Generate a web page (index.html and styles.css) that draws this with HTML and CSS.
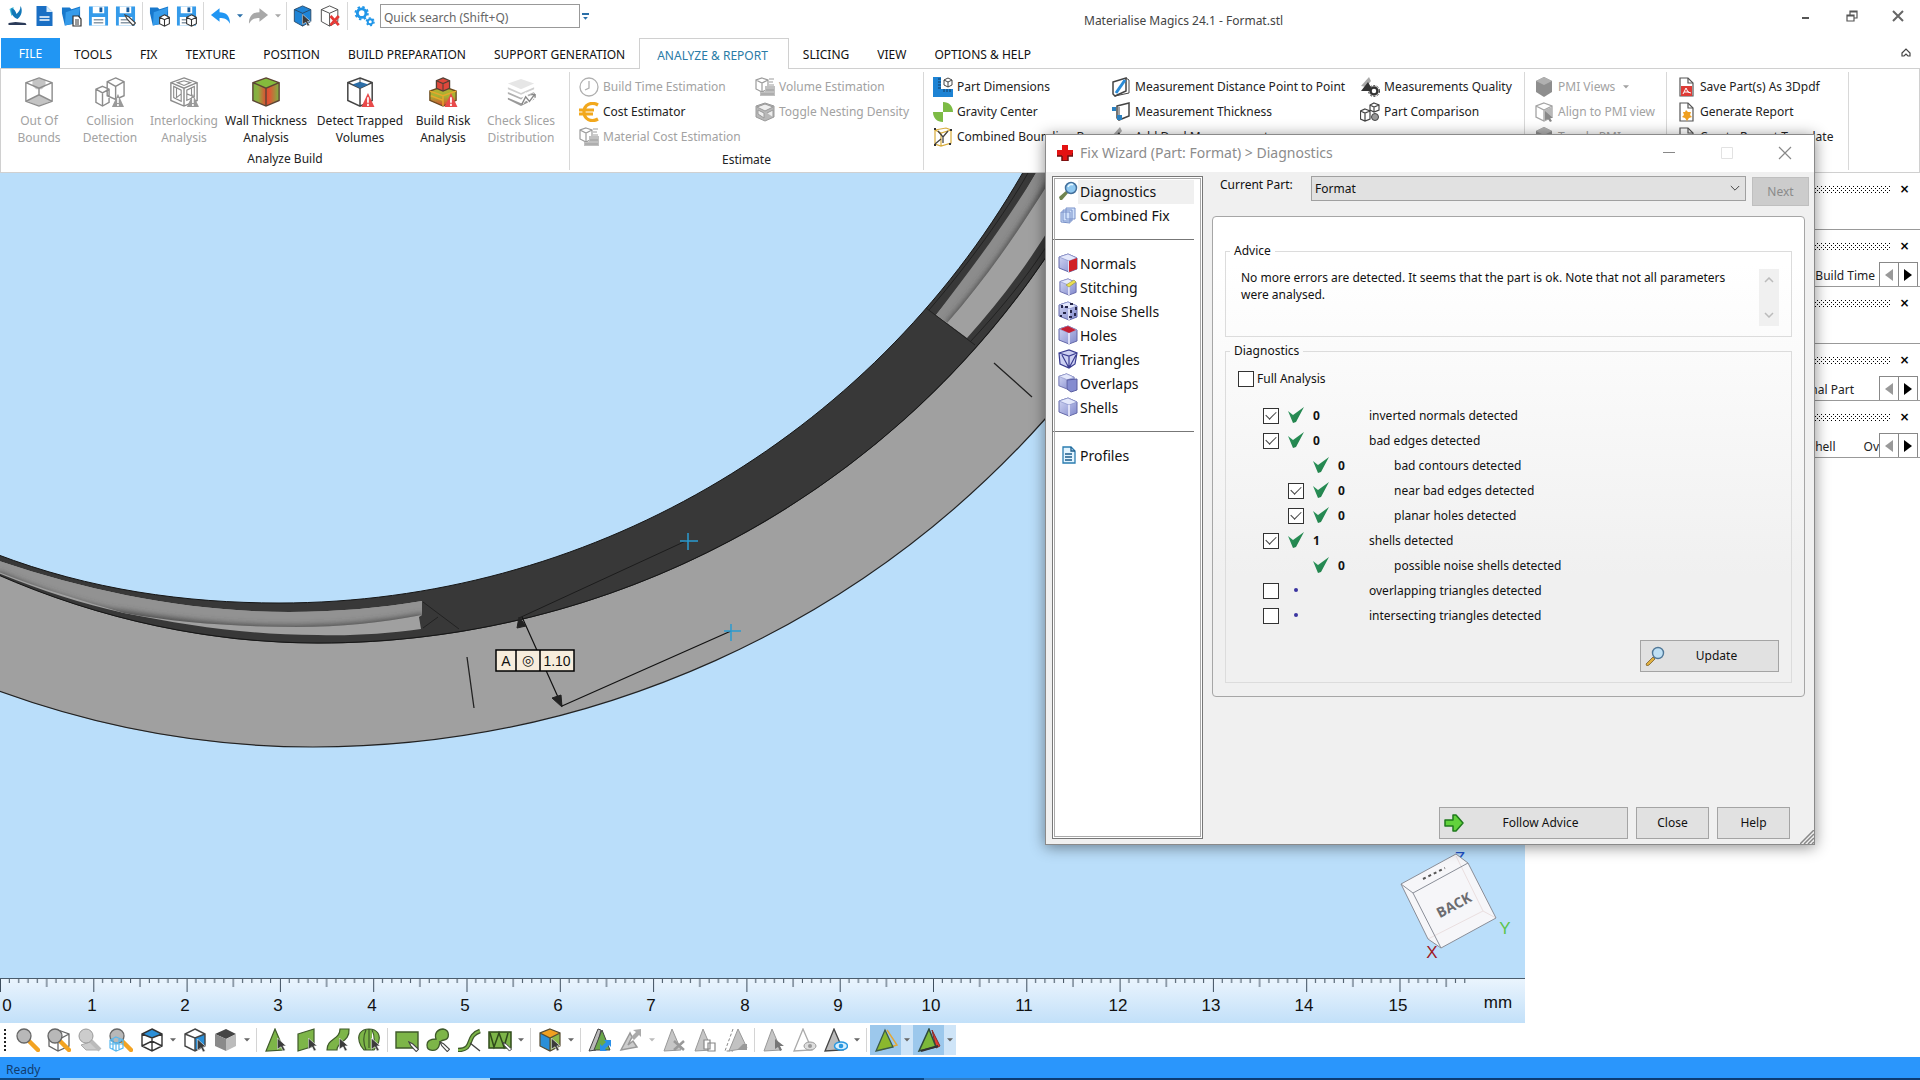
FILE: index.html
```html
<!DOCTYPE html>
<html lang="en">
<head>
<meta charset="utf-8">
<title>Materialise Magics 24.1 - Format.stl</title>
<link rel="stylesheet" href="styles.css">
</head>
<body>
<svg class="defs" aria-hidden="true">
  <defs>
    <linearGradient id="g-wall" x1="0" y1="0" x2="1" y2="0"><stop offset="0" stop-color="#7cb342"/><stop offset=".2" stop-color="#8fae40"/><stop offset=".5" stop-color="#e04a32"/><stop offset=".65" stop-color="#dc5a36"/><stop offset="1" stop-color="#7cb342"/></linearGradient>
    <linearGradient id="g-risk" x1="0" y1="0" x2="0" y2="1"><stop offset="0" stop-color="#b9b030"/><stop offset=".5" stop-color="#a6b233"/><stop offset="1" stop-color="#d9452f"/></linearGradient>
    <linearGradient id="g-face" x1="0" y1="0" x2="1" y2="1"><stop offset="0" stop-color="#d4d8f4"/><stop offset="1" stop-color="#8088cc"/></linearGradient>
    <linearGradient id="g-tick" x1="0" y1="0" x2="1" y2="1"><stop offset="0" stop-color="#2f9a60"/><stop offset="1" stop-color="#1d7a45"/></linearGradient>
    <pattern id="p-dots" width="4" height="4" patternUnits="userSpaceOnUse"><rect width="1" height="1" fill="#000"/><rect x="2" y="2" width="1" height="1" fill="#000"/></pattern>

    <symbol id="caret" viewBox="0 0 8 5"><path d="M0 0H8L4 4.500Z" fill="currentColor"/></symbol>
    <symbol id="go-left" viewBox="0 0 8 12"><path d="M8 0V12L0 6Z" fill="currentColor"/></symbol>
    <symbol id="go-right" viewBox="0 0 8 12"><path d="M0 0V12L8 6Z" fill="currentColor"/></symbol>
    <symbol id="cube" viewBox="0 0 24 24"><path d="M12 1.500L21 6V18L12 22.500L3 18V6Z" fill="#fff"/><path d="M12 1.500L21 6V18L12 22.500L3 18V6ZM3 6L12 10.500L21 6M12 10.500V22.500" fill="none" stroke="currentColor" stroke-width="2"/></symbol>
    <symbol id="cursor" viewBox="0 0 10 14"><path d="M0 0L9.500 8.500H6L8.500 13L6 14L4 9.500L0 12Z" fill="#3b3b3b" stroke="#fff" stroke-width=".6"/></symbol>
    <symbol id="warn" viewBox="0 0 12 13"><path d="M6 0L12 13H0Z" fill="currentColor"/><path d="M6 4V9M6 10V12" stroke="#fff" stroke-width="1.600"/></symbol>
    <symbol id="pen" viewBox="0 0 12 12"><path d="M1 1L3 5L9 11.500L11.500 9L5 3Z" fill="#fff" stroke="#444" stroke-width="1.200"/></symbol>

    <symbol id="logo" viewBox="0 0 20 22"><path d="M2 4L6 2V8L4 11Z" fill="#46c0d8"/><path d="M4 3C3 8 5 12 10 14C15 10 15 4 13 1C13 5 11 7 9 9C8 6 7 4 4 3Z" fill="#1177b8"/><path d="M1 18L8 17L18 18L19 20H1Z" fill="#2a3a58"/></symbol>
    <symbol id="file" viewBox="0 0 18 22"><path d="M1 1H11L17 7V21H1Z" fill="#1a6fc4"/><path d="M11 1V7H17Z" fill="#d8ecfb"/><path d="M4 12H14M4 15H14" stroke="#fff" stroke-width="1.500"/></symbol>
    <symbol id="folder" viewBox="0 0 22 22"><path d="M1 2H9L11 4L20 1V18L4 21L1 8Z" fill="#1878cc"/><path d="M5 7L20 2L17 18L4 21Z" fill="#359bea"/></symbol>
    <symbol id="page-badge" viewBox="0 0 10 12"><path d="M1 1H6.500L9 4V11H1Z" fill="#fff" stroke="#333" stroke-width="1.200"/><path d="M3 5H7M3 7H7M3 9H7" stroke="#333"/></symbol>
    <symbol id="floppy" viewBox="0 0 22 22"><path d="M1 1H21V21H1Z" fill="#359bea"/><path d="M5 1H17V8H5ZM4 12H18V21H4Z" fill="#fff"/><path d="M12 2H15V7H12Z" fill="#155a9c"/><path d="M6 15H16M6 18H16" stroke="#8a9aa8" stroke-width="1.500"/></symbol>
    <symbol id="undo" viewBox="0 0 22 16"><path d="M1 7L10 0V4C17 4 21 8 21 16C18 11 15 10 10 10V14Z" fill="currentColor"/></symbol>
    <symbol id="gears" viewBox="0 0 22 22"><circle cx="8" cy="8" r="4.500" fill="none" stroke="#2196e8" stroke-width="3"/><circle cx="8" cy="8" r="6.500" fill="none" stroke="#2196e8" stroke-width="2" stroke-dasharray="2.550"/><circle cx="17" cy="17" r="2.600" fill="none" stroke="#2196e8" stroke-width="2"/><circle cx="17" cy="17" r="4" fill="none" stroke="#2196e8" stroke-width="1.500" stroke-dasharray="2.100"/></symbol>
    <symbol id="cube-blue" viewBox="0 0 22 24"><path d="M10 1L19 5V18L10 23L1 18V5Z" fill="#1e84d6" stroke="#2a4866"/><path d="M1 5L10 9L19 5M10 9V23" fill="none" stroke="#2a4866"/><use href="#cursor" x="9" y="10" width="11" height="13"/></symbol>
    <symbol id="cube-del" viewBox="0 0 22 24"><path d="M10 1L19 5V18L10 23L1 18V5ZM1 5L10 9L19 5M10 9V23" fill="#fff" stroke="#444"/><path d="M11 12L20 22M20 12L11 22" stroke="#e53935" stroke-width="3"/></symbol>

    <symbol id="bounds" viewBox="0 0 32 32"><path d="M9 4C9 1 23 1 23 4V9L19 13H13L9 9Z" fill="#c4c4c4"/><path d="M2 25L16 18L30 25L16 31Z" fill="#c4c4c4"/><path d="M16 1L30 6V26L16 31L2 26V6ZM2 6L16 12L30 6M16 12V19M2 26L16 19L30 26" fill="none" stroke="#8c8c8c" stroke-width="1.500"/></symbol>
    <symbol id="collision" viewBox="0 0 32 32"><path d="M8 10L15 13V27L8 31L1 27V13ZM1 13L8 17L15 13M8 17V31M22 1L31 5V20L22 24L13 20V5ZM13 5L22 10L31 5M22 10V24" fill="#fff" stroke="#8c8c8c" stroke-width="1.500"/><use href="#warn" x="18" y="18" width="13" height="14" color="#9a9a9a"/></symbol>
    <symbol id="interlock" viewBox="0 0 32 32"><path d="M16 1L30 6V25L16 31L2 25V6ZM2 6L16 12L30 6M16 12V31" fill="#fff" stroke="#8c8c8c" stroke-width="1.500"/><path d="M5 10L13 14V26L5 22ZM19 14L27 10V21L19 25ZM8 12V22L13 18M24 12V20L19 18M9 6L16 9L23 6L16 4Z" fill="none" stroke="#8c8c8c" stroke-width="1.200"/><use href="#warn" x="19" y="18" width="13" height="14" color="#9a9a9a"/></symbol>
    <symbol id="wall" viewBox="0 0 32 32"><path d="M16 1L30 6V25L16 31L2 25V6Z" fill="url(#g-wall)"/><path d="M16 1L30 6L16 12L2 6Z" fill="#84ba3c"/><path d="M16 1L30 6V25L16 31L2 25V6ZM2 6L16 12L30 6M16 12V31" fill="none" stroke="#5c4434" stroke-width="1.500"/></symbol>
    <symbol id="trapped" viewBox="0 0 32 32"><path d="M16 1L29 6V25L16 31L3 25V6ZM3 6L16 12L29 6M16 12V31" fill="#fff" stroke="#444" stroke-width="1.600"/><path d="M8 8L16 5L25 8L16 12Z" fill="#2c6ea8"/><path d="M16 1V6" stroke="#444"/><use href="#warn" x="17" y="17" width="15" height="15" color="#e84a4a"/></symbol>
    <symbol id="risk" viewBox="0 0 32 32"><path d="M16 10L30 15V25L16 31L2 25V15Z" fill="url(#g-risk)" stroke="#6a4a20" stroke-width="1.400"/><path d="M2 15L16 20L30 15M16 20V31M3 20L16 25" fill="none" stroke="#e8a72c" stroke-width="1.500"/><path d="M16 1L23 4V12L16 15L9 12V4Z" fill="#e0483c" stroke="#554035" stroke-width="1.400"/><path d="M9 4L16 7L23 4M16 7V15" fill="none" stroke="#554035" stroke-width="1.200"/><use href="#warn" x="17" y="17" width="15" height="15" color="#e84a4a"/></symbol>
    <symbol id="slices" viewBox="0 0 32 32"><path d="M16 2L30 7L16 13L2 7Z" fill="#e6e6e6"/><path d="M2 11L16 17L30 11L30 13L16 19L2 13Z" fill="#cfcfcf"/><path d="M2 16L16 22L30 16V18L16 24L2 18Z" fill="#b0b0b0"/><path d="M2 22L16 28L30 22V24L16 31L2 24Z" fill="#999"/><path d="M17 28L21 20L25 26L31 18" fill="none" stroke="#fff" stroke-width="4"/><path d="M17 29L21 21L25 26L31 18M31 18L27 19M31 18V22" fill="none" stroke="#888" stroke-width="1.500"/></symbol>

    <symbol id="clock" viewBox="0 0 20 20"><circle cx="10" cy="10" r="9" fill="none" stroke="#b0b0b0" stroke-width="1.300"/><path d="M10 4V11L6 13" fill="none" stroke="#b0b0b0" stroke-width="1.300"/></symbol>
    <symbol id="euro" viewBox="0 0 20 20"><path d="M19 3C12 -1 5 3 5 10C5 17 12 21 19 17M0 8H15M0 12H14" fill="none" stroke="#f2a81d" stroke-width="3.200"/></symbol>
    <symbol id="est-cube" viewBox="0 0 20 20"><path d="M7 1L13 3V12L7 15L1 12V3ZM1 3L7 6L13 3M7 6V15" fill="#fff" stroke="#9c9c9c" stroke-width="1.200"/><path d="M10 9H20V19H5V15H10Z" fill="#c0c0c0"/><path d="M14 2H19M14 5H18M14 8H19M6 17H19M11 13H19" stroke="#9c9c9c"/></symbol>
    <symbol id="nest" viewBox="0 0 20 20"><path d="M10 1L19 4V15L10 19L1 15V4Z" fill="#b8b8b8" stroke="#9a9a9a"/><path d="M2 5L10 9L18 5L10 2ZM3 12L9 16V11L3 8ZM12 11L18 8V15" fill="#eee" stroke="#9a9a9a"/></symbol>
    <symbol id="dims" viewBox="0 0 20 20"><path d="M0 0H8V12H20V20H0Z" fill="#1d83d4"/><path d="M8 2H5M8 5H5M8 8H5M8 11H5M11 12V15M14 12V15M17 12V15" stroke="#123a60"/><path d="M15 1L19 3V8L15 10L11 8V3ZM11 3L15 5L19 3M15 5V10" fill="#fff" stroke="#444"/></symbol>
    <symbol id="gravity" viewBox="0 0 20 20"><path d="M10 10V0C16 0 20 4 20 10ZM10 10H0C0 16 4 20 10 20Z" fill="#7dbb45"/></symbol>
    <symbol id="bbox" viewBox="0 0 20 20"><path d="M2 3L13 1L18 3V16L8 19L2 17ZM2 3L8 6L18 3M8 6V19" fill="none" stroke="#d8ac3c" stroke-width="1.200"/><path d="M5 4L10 10L15 4M10 10V16M2 17L8 12" fill="none" stroke="#444" stroke-width="1.300"/><path d="M1 1h2v2H1zM17 2h2v2h-2zM1 17h2v2H1zM16 16h2v2h-2z" fill="#333"/></symbol>
    <symbol id="dist" viewBox="0 0 20 20"><path d="M2 5L15 1V14L4 19L2 17Z" fill="#fff" stroke="#444" stroke-width="1.500"/><path d="M15 1L18 3V16L4 19" fill="none" stroke="#444"/><path d="M14 3L5 16" stroke="#2a8cd8" stroke-width="3"/></symbol>
    <symbol id="thick" viewBox="0 0 20 20"><path d="M6 4L18 1V14L8 18L6 16Z" fill="#fff" stroke="#444" stroke-width="1.500"/><path d="M8 5V18" stroke="#444"/><path d="M1 5H5V9H1ZM6 13H11V18H6Z" fill="#2a80c0"/></symbol>
    <symbol id="quality" viewBox="0 0 20 20"><path d="M1 9L9 0L11 4L6 10Z" fill="#aaa"/><path d="M1 14L8 5L13 14Z" fill="#333"/><circle cx="14" cy="14" r="3.500" fill="#fff" stroke="#333" stroke-width="2.500"/><circle cx="14" cy="14" r="5.500" fill="none" stroke="#333" stroke-dasharray="2 1.500"/></symbol>
    <symbol id="compare" viewBox="0 0 20 20"><path d="M5 7L10 9V17L5 19L0.500 17V9ZM0.500 9L5 11L10 9M5 11V19M14 1L19 3V8L14 10L10 8V3ZM10 3L14 5L19 3M14 5V10" fill="#fff" stroke="#444" stroke-width="1.200"/><circle cx="15" cy="15" r="3.500" fill="#999" stroke="#444"/></symbol>
    <symbol id="pmi" viewBox="0 0 20 20"><path d="M10 0L18 4V15L10 20L2 15V4Z" fill="#8e8e8e"/><path d="M2 4L10 8L18 4L10 0Z" fill="#b0b0b0"/></symbol>
    <symbol id="pmi-align" viewBox="0 0 20 20"><path d="M10 1L18 4V15L10 19L2 15V4ZM2 4L10 8L18 4M10 8V19" fill="#fff" stroke="#a4a4a4" stroke-width="1.300"/><path d="M10 8L18 5V15L10 19Z" fill="#b8b8b8"/><path d="M11 9L19 16H16L18 19L16 20L14 17L11 18Z" fill="#888"/></symbol>
    <symbol id="doc" viewBox="0 0 20 20"><path d="M4 1H12L17 6V19H4Z" fill="#fff" stroke="#555" stroke-width="1.200"/><path d="M12 1V6H17" fill="none" stroke="#555" stroke-width="1.200"/></symbol>
    <symbol id="doc-pdf" viewBox="0 0 20 20"><use href="#doc"/><rect x="5" y="9" width="11" height="10" fill="#dd3b36"/><path d="M7 17L10 11L12 15L15 16M8 15H13" fill="none" stroke="#fff"/></symbol>
    <symbol id="doc-gear" viewBox="0 0 20 20"><use href="#doc"/><path d="M10 8L12 10L15 10L14 13L16 15L13 16L11 19L9 16L6 15L8 13L7 10L9 10Z" fill="#f0a020"/></symbol>

    <symbol id="vcube" viewBox="0 0 20 20"><path d="M1 4L10 1L19 5V16L11 19L1 15Z" fill="url(#g-face)" stroke="#6468a8"/><path d="M1 4L10 1L19 5L11 8Z" fill="#e4e8fb" stroke="#8890c8" stroke-width=".7"/><path d="M11 8V19" stroke="#f2f2ff" stroke-width="1.500"/></symbol>
    <symbol id="v-lens" viewBox="0 0 20 20"><path d="M2 19L1 16L9 9L11 11L4 19Z" fill="#6f8450"/><circle cx="13" cy="7" r="5.500" fill="#8fc8f0" stroke="#44709c" stroke-width="1.500"/><path d="M10 6C11 3 14 3 15 4" fill="none" stroke="#e4f6ff" stroke-width="1.500"/></symbol>
    <symbol id="v-lens-gold" viewBox="0 0 20 20"><path d="M2 20L1 18L8 11L10 13L4 19Z" fill="#e0b040" stroke="#6a5020" stroke-width=".7"/><circle cx="13" cy="7" r="5.500" fill="#bfe0f4" stroke="#507898" stroke-width="1.400"/></symbol>
    <symbol id="v-multi" viewBox="0 0 20 20"><path d="M8 3H17V14H8ZM5 5H14V16H5ZM3 7H12V18L3 17Z" fill="#cfe0fa" stroke="#7890c8"/></symbol>
    <symbol id="v-normals" viewBox="0 0 20 20"><use href="#vcube"/><path d="M11 8L19 5V16L11 19Z" fill="#d02028"/></symbol>
    <symbol id="v-stitch" viewBox="0 0 20 20"><use href="#vcube" x="1" y="1" width="18" height="18"/><path d="M8 8L16 3L18 5L11 10Z" fill="#ece050" stroke="#90903a" stroke-width=".6"/></symbol>
    <symbol id="v-noise" viewBox="0 0 20 20"><use href="#vcube"/><path d="M3 4h2v3H3zM12 2h3v2h-3zM17 6h2v3h-2zM5 11h3v2H5zM12 9h2v3h-2zM16 12h2v3h-2zM2 14h2v2H2zM11 15h3v2h-3zM7 5h3v2H7z" fill="#26264a"/></symbol>
    <symbol id="v-holes" viewBox="0 0 20 20"><use href="#vcube"/><path d="M2 4L10 1L18 5L11 8Z" fill="#c42034"/></symbol>
    <symbol id="v-tri" viewBox="0 0 20 20"><path d="M1 4L11 1L19 4L17 15L11 19L2 15Z" fill="#cdd0f2"/><path d="M1 4L11 1L19 4L17 15L11 19L2 15ZM1 4L11 7L19 4M11 7V19M11 19L4 6M11 19L18 6" fill="none" stroke="#3a3c90" stroke-width="1.200"/></symbol>
    <symbol id="v-over" viewBox="0 0 20 20"><use href="#vcube" width="17" height="17"/><path d="M9 7L19 6V17L13 19L9 16Z" fill="#848cd0" stroke="#585ca0"/></symbol>
    <symbol id="v-doc" viewBox="0 0 20 20"><path d="M5 2H13L17 6V18H5Z" fill="#e2f4ff" stroke="#2a7cb0" stroke-width="1.300"/><path d="M13 2V6H17M7 9H14M7 12H14M7 15H14" fill="none" stroke="#1c5c8c" stroke-width="1.300"/></symbol>
    <symbol id="tick" viewBox="0 0 16 16"><path d="M0 4L5 8L16 0L8 15L5 16Z" fill="url(#g-tick)"/></symbol>

    <symbol id="lens" viewBox="0 0 24 24"><path d="M13 13L22 22" stroke="#f3a322" stroke-width="4.500" stroke-linecap="round"/><circle cx="8" cy="8" r="7" fill="#b8b8b8" stroke="#666" stroke-width="1.300"/></symbol>
    <symbol id="lens-cube" viewBox="0 0 24 24"><path d="M11 2L22 6V18L11 23L2 18V6M11 23V12L22 6" fill="none" stroke="#666" stroke-width="1.300"/><use href="#lens"/></symbol>
    <symbol id="lens-gray" viewBox="0 0 24 24"><path d="M3 17L12 14L20 22H8Z" fill="#ccc" stroke="#aaa"/><path d="M13 13L22 22" stroke="#bbb" stroke-width="4"/><circle cx="8" cy="8" r="7" fill="#ccc" stroke="#999"/></symbol>
    <symbol id="lens-fit" viewBox="0 0 24 24"><use href="#lens"/><path d="M7 9L14 12V20L7 23L1 20V12ZM1 12L7 15L14 12M7 15V23M4 10V21M10 10V22M1 16H14" fill="none" stroke="#58b8ee" stroke-width="1.200"/></symbol>
    <symbol id="cube-top" viewBox="0 0 24 24"><path d="M12 1L22 6L12 10L2 6Z" fill="#2a8fd8"/><path d="M12 1L22 6V18L12 23L2 18V6ZM2 6L12 10L22 6M12 10V23M2 18L12 13L22 18" fill="none" stroke="#333" stroke-width="1.400"/></symbol>
    <symbol id="cube-side" viewBox="0 0 24 24"><path d="M12 10L22 6V18L12 23Z" fill="#2a8fd8"/><path d="M12 1L22 6V18L12 23L2 18V6ZM2 6L12 10L22 6M12 10V23" fill="none" stroke="#444" stroke-width="1.400"/><use href="#cursor" x="14" y="11" width="10" height="13"/></symbol>
    <symbol id="cube-shade" viewBox="0 0 24 24"><path d="M12 1L22 6L12 11L1 6Z" fill="#444"/><path d="M1 6L12 11V23L1 18Z" fill="#8a8a8a"/><path d="M12 11L22 6V18L12 23Z" fill="#bcbcbc"/></symbol>
    <symbol id="mark-tri" viewBox="0 0 24 24"><path d="M11 1L20 22L2 23Z" fill="#7db548" stroke="#3f5a2a" stroke-width="1.200"/><use href="#cursor" x="13" y="10" width="10" height="13"/></symbol>
    <symbol id="mark-plane" viewBox="0 0 24 24"><path d="M3 6L19 1V18L3 23Z" fill="#7db548" stroke="#3f5a2a" stroke-width="1.200"/><use href="#cursor" x="13" y="10" width="10" height="13"/></symbol>
    <symbol id="mark-surf" viewBox="0 0 24 24"><path d="M1 22C1 10 14 12 14 1H23C24 14 11 13 11 22Z" fill="#7db548" stroke="#3f5a2a" stroke-width="1.200"/><use href="#cursor" x="13" y="10" width="10" height="13"/></symbol>
    <symbol id="mark-shell" viewBox="0 0 24 24"><path d="M7 22L4 18C-2 6 5 1 12 1C19 1 26 6 20 18L17 22ZM9 22C5 12 7 6 9 2M15 22C19 12 17 6 15 2M12 1V20" fill="#7db548" stroke="#3f5a2a" stroke-width="1.200"/><use href="#cursor" x="14" y="10" width="10" height="13"/></symbol>
    <symbol id="mark-rect" viewBox="0 0 24 24"><path d="M1 4H23V20H1Z" fill="#7db548" stroke="#3f5a2a" stroke-width="1.400"/><use href="#pen" x="13" y="13" width="11" height="11"/></symbol>
    <symbol id="mark-free" viewBox="0 0 24 24"><path d="M10 11C8 5 12 1 17 1C24 2 24 11 18 12C13 13 14 15 13 18C11 24 1 24 1 17C1 12 6 11 10 11Z" fill="#7db548" stroke="#3f5a2a" stroke-width="1.300"/><use href="#pen" x="13" y="13" width="11" height="11"/></symbol>
    <symbol id="mark-curve" viewBox="0 0 24 24"><path d="M1 22C18 22 8 8 23 3" fill="none" stroke="#3f5a2a" stroke-width="4.500"/><path d="M1 22C18 22 8 8 23 3" fill="none" stroke="#7db548" stroke-width="2"/><path d="M13 15L23 23" stroke="#444" stroke-width="1.500"/></symbol>
    <symbol id="mark-zig" viewBox="0 0 24 24"><path d="M1 4H23V20H1Z" fill="#7db548" stroke="#2f4a1a" stroke-width="1.500"/><path d="M2 5L6 19L11 5L16 19L20 5" fill="none" stroke="#2f4a1a" stroke-width="1.500"/><use href="#pen" x="14" y="13" width="10" height="11"/></symbol>
    <symbol id="cube-color" viewBox="0 0 24 24"><path d="M12 1L22 5L12 10L2 5Z" fill="#f0a020"/><path d="M2 5L12 10V23L2 18Z" fill="#2a8fd8"/><path d="M12 10L22 5V18L12 23Z" fill="#8ab84a"/><path d="M12 1L22 5V18L12 23L2 18V5ZM2 5L12 10L22 5M12 10V23" fill="none" stroke="#544a30" stroke-width="1.200"/><use href="#cursor" x="13" y="10" width="10" height="13"/></symbol>
    <symbol id="tri-inv" viewBox="0 0 24 24"><path d="M10 1L13 2L8 22L1 23Z" fill="#bbb" stroke="#444"/><path d="M14 2L22 22H6Z" fill="#6aa84a" stroke="#444"/><path d="M16 12H23V19L21 17L17 21L19 23H12V16L14 18L18 14Z" fill="#2a90e8"/></symbol>
    <symbol id="tri-mod" viewBox="0 0 24 24"><path d="M11 5L2 22L18 19L14 13L9 17L13 9Z" fill="#ccc" stroke="#999" stroke-width="1.500"/><path d="M22 1V9L20 7L15 12L12 9L17 4L14 2Z" fill="#aaa"/></symbol>
    <symbol id="tri-gray" viewBox="0 0 24 24"><path d="M10 1L19 22L2 23Z" fill="#c6c6c6" stroke="#999"/></symbol>
    <symbol id="tri-x" viewBox="0 0 24 24"><use href="#tri-gray"/><path d="M12 13L22 22M22 13L12 22" stroke="#999" stroke-width="2.500"/></symbol>
    <symbol id="tri-copy" viewBox="0 0 24 24"><use href="#tri-gray"/><path d="M11 12H17V21H11ZM15 15H22V23H15Z" fill="#fff" stroke="#888" stroke-width="1.200"/></symbol>
    <symbol id="tri-sep" viewBox="0 0 24 24"><path d="M9 1L1 23H9" fill="none" stroke="#888" stroke-dasharray="3 2"/><path d="M14 1L23 20L5 23Z" fill="#c2c2c2" stroke="#999"/><path d="M13 22L19 16H23V22Z" fill="#999"/></symbol>
    <symbol id="tri-sel" viewBox="0 0 24 24"><use href="#tri-gray"/><path d="M13 11L22 18H18L20 22L18 23L16 19L13 21Z" fill="#777"/></symbol>
    <symbol id="tri-hide" viewBox="0 0 24 24"><path d="M10 1L19 22L1 23Z" fill="#fff" stroke="#aaa" stroke-width="1.300"/><ellipse cx="17" cy="18" rx="6" ry="4" fill="#ddd" stroke="#999"/><circle cx="17" cy="18" r="2" fill="#999"/></symbol>
    <symbol id="tri-show" viewBox="0 0 24 24"><path d="M10 1L19 22L1 23Z" fill="#bbb" stroke="#444" stroke-width="1.300"/><ellipse cx="17" cy="18" rx="6.500" ry="4" fill="#d8f0ff" stroke="#2a98e0" stroke-width="1.500"/><circle cx="17" cy="18" r="2.300" fill="#2a98e0"/></symbol>
    <symbol id="tri-edge" viewBox="0 0 24 24"><path d="M13 2L23 17L6 22" fill="none" stroke="#e2a838" stroke-width="1.500"/><path d="M11 2L19 19L2 23Z" fill="#8ab82e" stroke="#3a5a4a" stroke-width="1.300"/></symbol>
    <symbol id="tri-red" viewBox="0 0 24 24"><path d="M15 2L23 18L19 20Z" fill="#e03c34" stroke="#8a2a24"/><path d="M12 1L19 19L2 23Z" fill="#7cb83a" stroke="#2e4a3a" stroke-width="1.500"/><path d="M4 23L21 18" stroke="#333" stroke-width="2"/></symbol>
  </defs>
</svg>

<div class="app">
  <header class="titlebar">
    <div class="quick">
      <button class="q" aria-label="Magics"><svg><use href="#logo"/></svg></button>
      <button class="q" aria-label="New"><svg><use href="#file"/></svg></button>
      <button class="q" aria-label="Open"><svg><use href="#folder"/><use href="#page-badge" x="11" y="10" width="10" height="12"/></svg></button>
      <button class="q" aria-label="Save"><svg><use href="#floppy"/></svg></button>
      <button class="q" aria-label="Save as"><svg><use href="#floppy"/><use href="#pen" x="9" y="9" width="12" height="12"/></svg></button>
      <span class="q-sep"></span>
      <button class="q" aria-label="Load part"><svg><use href="#folder"/><use href="#cube" x="9" y="9" width="13" height="13" color="#333"/></svg></button>
      <button class="q" aria-label="Save part"><svg><use href="#floppy"/><use href="#cube" x="9" y="9" width="13" height="13" color="#333"/></svg></button>
      <span class="q-sep"></span>
      <button class="q blue" aria-label="Undo"><svg><use href="#undo"/></svg></button>
      <button class="q-caret" aria-label="Undo list"><svg><use href="#caret"/></svg></button>
      <button class="q gray" aria-label="Redo"><svg class="flip"><use href="#undo"/></svg></button>
      <button class="q-caret gray" aria-label="Redo list"><svg><use href="#caret"/></svg></button>
      <span class="q-sep"></span>
      <button class="q" aria-label="Select parts"><svg><use href="#cube-blue"/></svg></button>
      <button class="q" aria-label="Unload part"><svg><use href="#cube-del"/></svg></button>
      <span class="q-sep"></span>
      <button class="q" aria-label="Settings"><svg><use href="#gears"/></svg></button>
      <input class="search" type="text" placeholder="Quick search (Shift+Q)" aria-label="Quick search">
      <button class="q-caret more" aria-label="Customize"><svg><use href="#caret"/></svg></button>
    </div>
    <h1 class="app-title">Materialise Magics 24.1 - Format.stl</h1>
    <div class="win-controls">
      <button aria-label="Minimize"><svg viewBox="0 0 16 16"><path d="M4 10H11" stroke="#555" stroke-width="2"/></svg></button>
      <button aria-label="Restore"><svg viewBox="0 0 16 16"><path d="M3 7H10V13H3ZM3 8H10M6 7V3H13V10H10M6 4H13" fill="none" stroke="#555" stroke-width="1.200"/></svg></button>
      <button aria-label="Close window"><svg viewBox="0 0 16 16"><path d="M3 3L13 13M13 3L3 13" stroke="#666" stroke-width="2"/></svg></button>
    </div>
  </header>

  <nav class="tabs">
    <button class="tab file">FILE</button>
    <button class="tab">TOOLS</button>
    <button class="tab">FIX</button>
    <button class="tab">TEXTURE</button>
    <button class="tab">POSITION</button>
    <button class="tab">BUILD PREPARATION</button>
    <button class="tab">SUPPORT GENERATION</button>
    <button class="tab active">ANALYZE &amp; REPORT</button>
    <button class="tab">SLICING</button>
    <button class="tab">VIEW</button>
    <button class="tab">OPTIONS &amp; HELP</button>
    <button class="collapse" aria-label="Collapse ribbon"><svg viewBox="0 0 12 12"><path d="M2 6L6 2L10 6V9H8L6 7L4 9H2Z" fill="none" stroke="#444" stroke-width="1.200"/></svg></button>
  </nav>

  <section class="ribbon">
    <div class="group g-build">
      <div class="bigs">
        <button class="big" disabled><svg><use href="#bounds"/></svg>Out Of<br>Bounds</button>
        <button class="big" disabled><svg><use href="#collision"/></svg>Collision<br>Detection</button>
        <button class="big" disabled><svg><use href="#interlock"/></svg>Interlocking<br>Analysis</button>
        <button class="big"><svg><use href="#wall"/></svg>Wall Thickness<br>Analysis</button>
        <button class="big"><svg><use href="#trapped"/></svg>Detect Trapped<br>Volumes</button>
        <button class="big"><svg><use href="#risk"/></svg>Build Risk<br>Analysis</button>
        <button class="big" disabled><svg><use href="#slices"/></svg>Check Slices<br>Distribution</button>
      </div>
      <div class="group-name">Analyze Build</div>
    </div>
    <div class="group g-estimate">
      <div class="smalls">
        <button class="small" disabled><svg><use href="#clock"/></svg>Build Time Estimation</button>
        <button class="small"><svg><use href="#euro"/></svg>Cost Estimator</button>
        <button class="small" disabled><svg><use href="#est-cube"/></svg>Material Cost Estimation</button>
        <button class="small" disabled><svg><use href="#est-cube"/></svg>Volume Estimation</button>
        <button class="small" disabled><svg><use href="#nest"/></svg>Toggle Nesting Density</button>
      </div>
      <div class="group-name">Estimate</div>
    </div>
    <div class="group g-measure">
      <div class="smalls">
        <button class="small"><svg><use href="#dims"/></svg>Part Dimensions</button>
        <button class="small"><svg><use href="#gravity"/></svg>Gravity Center</button>
        <button class="small"><svg><use href="#bbox"/></svg>Combined Bounding Box</button>
        <button class="small"><svg><use href="#dist"/></svg>Measurement Distance Point to Point</button>
        <button class="small"><svg><use href="#thick"/></svg>Measurement Thickness</button>
        <button class="small"><svg><use href="#quality"/></svg>Add Dual Measurement</button>
        <button class="small"><svg><use href="#quality"/></svg>Measurements Quality</button>
        <button class="small"><svg><use href="#compare"/></svg>Part Comparison</button>
      </div>
    </div>
    <div class="group g-pmi">
      <div class="smalls">
        <button class="small" disabled><svg><use href="#pmi"/></svg>PMI Views<svg class="dd"><use href="#caret"/></svg></button>
        <button class="small" disabled><svg><use href="#pmi-align"/></svg>Align to PMI view</button>
        <button class="small" disabled><svg><use href="#pmi"/></svg>Toggle PMI</button>
      </div>
    </div>
    <div class="group g-report">
      <div class="smalls">
        <button class="small"><svg><use href="#doc-pdf"/></svg>Save Part(s) As 3Dpdf</button>
        <button class="small"><svg><use href="#doc-gear"/></svg>Generate Report</button>
        <button class="small"><svg><use href="#doc"/></svg>Create Report Template</button>
      </div>
    </div>
  </section>

  <main class="work">
    <div class="stage">
      <svg class="scene" viewBox="0 173 1525 805" preserveAspectRatio="xMinYMin slice" role="img" aria-label="Ring part with thickness measurement">
        <defs>
          <clipPath id="c-rod"><path id="rod" d="M-4 560C90 592 190 612 289 612C335 612 380 608 422 601V615C380 623 340 627 298 627C240 627 180 623 124 613C80 600 40 589 -4 571Z"/></clipPath>
          <clipPath id="c-rod2"><path id="rod2" d="M936 315C972 268 1008 220 1036 173H1053L1046 187C1014 238 984 281 947 323Z"/></clipPath>
          <filter id="soft" x="-10%" y="-50%" width="120%" height="200%"><feGaussianBlur stdDeviation="3"/></filter>
        </defs>
        <rect y="173" width="1525" height="805" fill="#badefa"/>
        <path d="M-4 573C100 620 212 643 318 643C610 643 882 499 1046 257L1090 190V370L1046 418C860 627 593 747 313 747C208 747 105 730 -4 690Z" fill="#a0a0a0" stroke="#222" stroke-width="1.200"/>
        <path d="M-4 554C90 590 186 603 279 603C585 603 869 439 1022 174L1030 160H1090V190L1046 257C882 499 610 643 318 643C212 643 100 620 -4 574Z" fill="#383838" stroke="#161616"/>
        <path d="M-4 560C90 592 190 612 289 612C335 612 380 608 422 601V615L419 617L421 629C385 634 350 636 318 635C250 635 190 626 124 613C80 603 40 590 -4 572Z" fill="#a0a0a0"/>
        <use href="#rod" fill="#929292"/>
        <g clip-path="url(#c-rod)"><path d="M-4 576C50 600 100 614 124 616C180 626 240 631 298 631C340 631 380 627 424 619" fill="none" stroke="#444" stroke-width="10" filter="url(#soft)"/></g>
        <path d="M936 315C975 268 1010 220 1036 173H1060V180L1046 234C1022 272 996 306 967 338Z" fill="#a0a0a0"/>
        <use href="#rod2" fill="#8c8c8c"/>
        <g clip-path="url(#c-rod2)"><path d="M949 325C986 283 1016 240 1055 175" fill="none" stroke="#444" stroke-width="7" filter="url(#soft)"/></g>
        <path d="M926 308L975 345M970 342C1000 310 1026 278 1046 247M929 310C970 262 1004 215 1028 173M423 602L459 629M423 628L438 617" fill="none" stroke="#222"/>
        <path d="M467 657L474 708M994 363L1032 397" stroke="#222" stroke-width="1.300"/>
        <path d="M519 618L688 540" stroke="#1c1c1c"/>
        <path d="M562 706L731 631M522 617L562 706" stroke="#111" stroke-width="1.200"/>
        <path d="M519 617L526 626L517 628ZM562 707L552 698L561 695Z" fill="#222" stroke="#222"/>
        <path d="M680 541H698M688 533V550M724 631H741M731 624V641" stroke="#2a9bd0" stroke-width="1.500"/>
        <g class="tag">
          <path d="M496 650H574V671H496ZM516 650V671M540 650V671" fill="#f7eddc" stroke="#000" stroke-width="1.500"/>
          <text x="506" y="666">A</text><text x="528" y="665">◎</text><text x="557" y="666">1.10</text>
        </g>
        <text x="1460" y="864" class="axis" fill="#1d50c8">Z</text>
        <path d="M1401 884L1456 854L1468 863L1496 918L1441 948L1428 939Z" fill="#f6f6f9"/>
        <path d="M1428 939L1483 911L1456 856M1483 911L1496 918" fill="none" stroke="#eadfe0"/>
        <path d="M1401 884L1456 854L1468 863L1496 918L1441 948L1428 939ZM1401 884L1413 893L1468 863M1413 893L1441 948" fill="none" stroke="#8a8e98"/>
        <path d="M1423 879L1445 868" stroke="#555" stroke-width="2" stroke-dasharray="3 3"/>
        <text x="1454" y="910" class="face" transform="rotate(-28 1454 905)">BACK</text>
        <text x="1432" y="958" class="axis" fill="#a01824">X</text>
        <text x="1505" y="934" class="axis" fill="#5cc44c">Y</text>
      </svg>
      <svg class="ruler" role="img" aria-label="Ruler in millimetres">
        <defs><pattern id="p-ruler" width="93.3" height="20" patternUnits="userSpaceOnUse"><path d="M.5 0V13M46.700 0V8M9.300 0V4M18.700 0V4M28 0V4M37.300 0V4M56 0V4M65.300 0V4M74.600 0V4M84 0V4" stroke="#3c4c5c" stroke-width="1"/></pattern></defs>
        <rect width="1466" height="20" fill="url(#p-ruler)"/>
        <text x="7" y="32">0</text><text x="92" y="32">1</text><text x="185" y="32">2</text><text x="278" y="32">3</text><text x="372" y="32">4</text><text x="465" y="32">5</text><text x="558" y="32">6</text><text x="651" y="32">7</text><text x="745" y="32">8</text><text x="838" y="32">9</text><text x="931" y="32">10</text><text x="1024" y="32">11</text><text x="1118" y="32">12</text><text x="1211" y="32">13</text><text x="1304" y="32">14</text><text x="1398" y="32">15</text><text x="1498" y="29">mm</text>
      </svg>
    </div>
    <aside class="docks">
      <section class="dock"><div class="dock-head"><svg><rect width="100%" height="7" fill="url(#p-dots)"/></svg><button aria-label="Close panel">×</button></div></section>
      <section class="dock"><div class="dock-head"><svg><rect width="100%" height="7" fill="url(#p-dots)"/></svg><button aria-label="Close panel">×</button></div>
        <div class="dock-tabs"><span>Build Time</span><button aria-label="Scroll left" class="off"><svg><use href="#go-left"/></svg></button><button aria-label="Scroll right"><svg><use href="#go-right"/></svg></button></div></section>
      <section class="dock"><div class="dock-head"><svg><rect width="100%" height="7" fill="url(#p-dots)"/></svg><button aria-label="Close panel">×</button></div></section>
      <section class="dock"><div class="dock-head"><svg><rect width="100%" height="7" fill="url(#p-dots)"/></svg><button aria-label="Close panel">×</button></div>
        <div class="dock-tabs parts"><span>Original Part</span><button aria-label="Scroll left" class="off"><svg><use href="#go-left"/></svg></button><button aria-label="Scroll right"><svg><use href="#go-right"/></svg></button></div></section>
      <section class="dock"><div class="dock-head"><svg><rect width="100%" height="7" fill="url(#p-dots)"/></svg><button aria-label="Close panel">×</button></div>
        <div class="dock-tabs shell"><span>Shell</span><span>Ov</span><button aria-label="Scroll left" class="off"><svg><use href="#go-left"/></svg></button><button aria-label="Scroll right"><svg><use href="#go-right"/></svg></button></div></section>
    </aside>
  </main>

  <div class="tools" role="toolbar">
    <button class="t" aria-label="Zoom"><svg><use href="#lens"/></svg></button>
    <button class="t" aria-label="Zoom part"><svg><use href="#lens-cube"/></svg></button>
    <button class="t" aria-label="Zoom platform"><svg><use href="#lens-gray"/></svg></button>
    <button class="t" aria-label="Zoom all"><svg><use href="#lens-fit"/></svg></button>
    <button class="t" aria-label="Views"><svg><use href="#cube-top"/></svg></button>
    <button class="t-dd" aria-label="More views"><svg><use href="#caret"/></svg></button>
    <button class="t" aria-label="Pick view"><svg><use href="#cube-side"/></svg></button>
    <button class="t" aria-label="Shading"><svg><use href="#cube-shade"/></svg></button>
    <button class="t-dd" aria-label="More shading"><svg><use href="#caret"/></svg></button>
    <span class="t-sep"></span>
    <button class="t" aria-label="Mark triangle"><svg><use href="#mark-tri"/></svg></button>
    <button class="t" aria-label="Mark plane"><svg><use href="#mark-plane"/></svg></button>
    <button class="t" aria-label="Mark surface"><svg><use href="#mark-surf"/></svg></button>
    <button class="t" aria-label="Mark shell"><svg><use href="#mark-shell"/></svg></button>
    <span class="t-sep"></span>
    <button class="t" aria-label="Rectangle marking"><svg><use href="#mark-rect"/></svg></button>
    <button class="t" aria-label="Freeform marking"><svg><use href="#mark-free"/></svg></button>
    <button class="t" aria-label="Curve marking"><svg><use href="#mark-curve"/></svg></button>
    <button class="t" aria-label="Window marking"><svg><use href="#mark-zig"/></svg></button>
    <button class="t-dd" aria-label="More marking"><svg><use href="#caret"/></svg></button>
    <span class="t-sep"></span>
    <button class="t" aria-label="Color"><svg><use href="#cube-color"/></svg></button>
    <button class="t-dd" aria-label="More colors"><svg><use href="#caret"/></svg></button>
    <span class="t-sep"></span>
    <button class="t" aria-label="Invert marked"><svg><use href="#tri-inv"/></svg></button>
    <button class="t" aria-label="Grow marked"><svg><use href="#tri-mod"/></svg></button>
    <button class="t-dd off" aria-label="More grow"><svg><use href="#caret"/></svg></button>
    <button class="t" aria-label="Delete marked"><svg><use href="#tri-x"/></svg></button>
    <button class="t" aria-label="Copy marked"><svg><use href="#tri-copy"/></svg></button>
    <button class="t" aria-label="Separate marked"><svg><use href="#tri-sep"/></svg></button>
    <span class="t-sep"></span>
    <button class="t" aria-label="Select marked"><svg><use href="#tri-sel"/></svg></button>
    <button class="t" aria-label="Hide marked"><svg><use href="#tri-hide"/></svg></button>
    <button class="t" aria-label="Show marked"><svg><use href="#tri-show"/></svg></button>
    <button class="t-dd" aria-label="More visibility"><svg><use href="#caret"/></svg></button>
    <span class="t-sep"></span>
    <button class="t on" aria-label="Triangle edges"><svg><use href="#tri-edge"/></svg></button>
    <button class="t-dd on" aria-label="More edges"><svg><use href="#caret"/></svg></button>
    <button class="t on" aria-label="Bad edges"><svg><use href="#tri-red"/></svg></button>
    <button class="t-dd on" aria-label="More bad edges"><svg><use href="#caret"/></svg></button>
  </div>

  <footer class="status">Ready</footer>

  <div class="dialog" role="dialog" aria-labelledby="dlg-title">
    <div class="dlg-bar">
      <svg class="plus" viewBox="0 0 16 16"><path d="M5 0H11V5H16V11H11V16H5V11H0V5H5Z" fill="#e31212"/><path d="M5 11V16H11V11H16V8M0 11H5" fill="none" stroke="#6a1010" stroke-width="1.500"/></svg>
      <h2 id="dlg-title">Fix Wizard (Part: Format) &gt; Diagnostics</h2>
      <button aria-label="Minimize dialog"><svg viewBox="0 0 14 14"><path d="M1 6.500H13" stroke="#888"/></svg></button>
      <button aria-label="Maximize dialog" disabled><svg viewBox="0 0 14 14"><path d="M1.500 1.500H12.500V12.500H1.500Z" fill="none" stroke="#e2e2e2"/></svg></button>
      <button aria-label="Close dialog"><svg viewBox="0 0 14 14"><path d="M1 1L13 13M13 1L1 13" stroke="#888" stroke-width="1.200"/></svg></button>
    </div>
    <div class="dlg-body">
      <ul class="pages">
        <li><a href="#diagnostics" class="sel"><svg><use href="#v-lens"/></svg><span>Diagnostics</span></a></li>
        <li><a href="#combined"><svg><use href="#v-multi"/></svg><span>Combined Fix</span></a></li>
        <li class="rule"></li>
        <li><a href="#normals"><svg><use href="#v-normals"/></svg><span>Normals</span></a></li>
        <li><a href="#stitching"><svg><use href="#v-stitch"/></svg><span>Stitching</span></a></li>
        <li><a href="#noise"><svg><use href="#v-noise"/></svg><span>Noise Shells</span></a></li>
        <li><a href="#holes"><svg><use href="#v-holes"/></svg><span>Holes</span></a></li>
        <li><a href="#triangles"><svg><use href="#v-tri"/></svg><span>Triangles</span></a></li>
        <li><a href="#overlaps"><svg><use href="#v-over"/></svg><span>Overlaps</span></a></li>
        <li><a href="#shells"><svg><use href="#vcube"/></svg><span>Shells</span></a></li>
        <li class="rule"></li>
        <li><a href="#profiles"><svg><use href="#v-doc"/></svg><span>Profiles</span></a></li>
      </ul>
      <div class="content">
        <div class="part-row">
          <label for="part">Current Part:</label>
          <div class="select"><select id="part"><option>Format</option></select><svg viewBox="0 0 12 8"><path d="M1 1L6 6L11 1" fill="none" stroke="#444" stroke-width="1.200"/></svg></div>
          <button class="btn next" disabled>Next</button>
        </div>
        <div class="panel">
          <fieldset class="advice">
            <legend>Advice</legend>
            <p>No more errors are detected. It seems that the part is ok. Note that not all parameters were analysed.</p>
            <div class="scroll"><svg viewBox="0 0 10 6"><path d="M1 5L5 1L9 5" fill="none" stroke="#bbb" stroke-width="1.500"/></svg><svg viewBox="0 0 10 6"><path d="M1 1L5 5L9 1" fill="none" stroke="#bbb" stroke-width="1.500"/></svg></div>
          </fieldset>
          <fieldset class="diag">
            <legend>Diagnostics</legend>
            <label class="full"><input type="checkbox">Full Analysis</label>
            <div class="rows">
              <label class="row"><input type="checkbox" checked><svg><use href="#tick"/></svg><b>0</b><span>inverted normals detected</span></label>
              <label class="row"><input type="checkbox" checked><svg><use href="#tick"/></svg><b>0</b><span>bad edges detected</span></label>
              <div class="row sub"><i></i><svg><use href="#tick"/></svg><b>0</b><span>bad contours detected</span></div>
              <label class="row sub"><input type="checkbox" checked><svg><use href="#tick"/></svg><b>0</b><span>near bad edges detected</span></label>
              <label class="row sub"><input type="checkbox" checked><svg><use href="#tick"/></svg><b>0</b><span>planar holes detected</span></label>
              <label class="row"><input type="checkbox" checked><svg><use href="#tick"/></svg><b>1</b><span>shells detected</span></label>
              <div class="row sub"><i></i><svg><use href="#tick"/></svg><b>0</b><span>possible noise shells detected</span></div>
              <label class="row"><input type="checkbox"><svg><circle cx="8" cy="8" r="2" fill="#3a34a0"/></svg><b></b><span>overlapping triangles detected</span></label>
              <label class="row"><input type="checkbox"><svg><circle cx="8" cy="8" r="2" fill="#3a34a0"/></svg><b></b><span>intersecting triangles detected</span></label>
            </div>
            <button class="btn update"><svg><use href="#v-lens-gold"/></svg><span>Update</span></button>
          </fieldset>
        </div>
        <div class="actions">
          <button class="btn follow"><svg viewBox="0 0 20 18"><path d="M1 6H9V1H12L19 9L12 17H9V12H1Z" fill="#62d23c" stroke="#1f7a1c" stroke-width="1.500" stroke-linejoin="round"/></svg><span>Follow Advice</span></button>
          <button class="btn">Close</button>
          <button class="btn">Help</button>
        </div>
      </div>
    </div>
    <svg class="grip" viewBox="0 0 14 14"><path d="M0 14L14 0M4 14L14 4M8 14L14 8M12 14L14 12" stroke="#888" stroke-width="1.500"/></svg>
  </div>
</div>
</body>
</html>
```
FILE: styles.css
```css
* { box-sizing: border-box; }

body {
  margin: 0;
  background: #fff;
  color: #222;
  font: 12px/16px "Noto Sans", "Open Sans", sans-serif;
}

button, input, select { font: inherit; color: inherit; }
button { margin: 0; padding: 0; border: 0; background: none; }
h1, h2, p, ul { margin: 0; padding: 0; font-weight: 400; }
svg { flex: none; display: block; }
.defs { position: absolute; width: 0; height: 0; }

.app {
  position: relative;
  display: flex;
  flex-direction: column;
  min-height: 100vh;
  overflow: hidden;
}

/* Title bar */
.titlebar { display: flex; height: 38px; }
.quick { display: flex; align-items: center; height: 32px; padding-left: 4px; }
.q { width: 27px; display: grid; place-items: center; color: #2196f3; }
.q svg { width: 21px; height: 22px; }
.q.gray, .q-caret.gray { color: #a8a8a8; }
.q .flip { transform: scaleX(-1); }
.q-sep { width: 1px; height: 28px; background: #d8d8d8; margin: 0 3px; }
.q-caret { width: 11px; color: #2a6fa8; display: grid; place-items: center; }
.q-caret svg { width: 6px; height: 4px; }
.q-caret.more svg { width: 7px; height: 7px; border-top: 2px solid #2a6fa8; padding-top: 2px; }
.search {
  width: 200px;
  height: 24px;
  margin-left: 2px;
  border: 1px solid #999;
  padding: 2px 3px 0;
  background: #fff;
}
.search::placeholder { color: #666; opacity: 1; }
.app-title { flex: 1; padding: 13px 0 0 493px; font-size: 12px; line-height: 16px; color: #444; white-space: nowrap; }
.win-controls { display: flex; height: 32px; padding-right: 14px; gap: 30px; align-items: center; }
.win-controls svg { width: 16px; height: 16px; }

/* Tabs */
.tabs {
  display: flex;
  height: 31px;
  padding-left: 1px;
  border-bottom: 1px solid #d0d0d0;
}
.tab { padding: 4px 14px 0; color: #111; white-space: nowrap; }
.tab.file { width: 59px; padding: 2px 0 0; background: #2196f3; color: #fff; }
.tab.active {
  margin-bottom: -1px;
  padding: 3px 20px 0 17px;
  background: #fff;
  border: 1px solid #d0d0d0;
  border-bottom: 0;
  color: #2a7ba6;
}
.collapse { margin: 0 8px 0 auto; }
.collapse svg { width: 12px; height: 12px; }

/* Ribbon */
.ribbon { display: flex; height: 104px; padding: 3px 0 2px; border: 1px solid #d0d0d0; border-top: 0; }
.group { display: flex; flex-direction: column; border-right: 1px solid #d8d8d8; }
.g-build { width: 569px; }
.g-estimate { width: 354px; }
.g-measure { width: 601px; }
.g-pmi { width: 142px; }
.g-report { width: 182px; }
.bigs { display: grid; grid-template-columns: 68px 74px 74px 90px 98px 68px 88px; padding: 4px 0 0 4px; height: 77px; }
.big { display: flex; flex-direction: column; align-items: center; line-height: 17px; white-space: nowrap; }
.big svg { width: 30px; height: 32px; margin-bottom: 4px; }
.big:disabled, .small:disabled { color: #a2a2a2; }
.group-name { text-align: center; line-height: 22px; }
.smalls {
  display: grid;
  grid-auto-flow: column;
  grid-template-rows: repeat(3, 25px);
  padding: 2px 0 0 9px;
  justify-content: start;
}
.g-estimate .smalls { grid-template-columns: 176px 160px; }
.g-measure .smalls { grid-template-columns: 178px 249px 160px; }
.small { display: flex; align-items: center; gap: 4px; white-space: nowrap; }
.small svg { width: 20px; height: 20px; }
.small .dd { width: 6px; height: 4px; margin-left: 4px; }

/* Work area */
.work { flex: 1; display: flex; }
.stage { flex: 1; display: flex; flex-direction: column; min-width: 0; }
.scene { flex: 1 1 0; width: 100%; min-height: 0; height: 0; }
.tag text { font: 14px "Liberation Sans", sans-serif; text-anchor: middle; fill: #111; }
.axis { font: 17px "Liberation Sans", sans-serif; text-anchor: middle; }
.face { font: 700 14px "Open Sans", sans-serif; text-anchor: middle; fill: #6c6c70; }
.ruler { width: 100%; height: 45px; border-top: 1px solid #4a5c6c; background: linear-gradient(#eaf4fd, #c2e0f9); }
.ruler text { font: 17px "Liberation Sans", sans-serif; text-anchor: middle; fill: #111; }

.docks { width: 395px; }
.dock { height: 57px; display: flex; flex-direction: column; justify-content: space-between; border-bottom: 1px solid #999; }
.dock-head { display: flex; align-items: center; height: 32px; padding-right: 9px; gap: 8px; }
.dock-head svg { flex: 1; width: 0; height: 7px; }
.dock-head button { width: 13px; font: 700 12px/14px "DejaVu Sans", sans-serif; color: #000; }
.dock-tabs { display: flex; justify-content: flex-end; height: 24px; padding-right: 2px; line-height: 28px; }
.dock-tabs span { padding-right: 4px; white-space: nowrap; }
.dock-tabs.parts span { padding-right: 25px; }
.dock-tabs.shell span { padding-right: 0; }
.dock-tabs.shell span:first-child { padding-right: 28px; }
.dock-tabs button { width: 20px; display: grid; place-items: center; border: 1px solid #888; border-bottom: 0; color: #000; }
.dock-tabs button + button { margin-left: -1px; }
.dock-tabs button svg { width: 8px; height: 12px; }
.dock-tabs .off { color: #999; }

/* Marking toolbar */
.tools {
  display: flex;
  align-items: center;
  height: 34px;
  padding-left: 12px;
  background: repeating-linear-gradient(#222 0 2px, transparent 2px 4px) 4px 6px / 2px 22px no-repeat;
}
.t { width: 31px; height: 30px; display: grid; place-items: center; }
.t svg { width: 24px; height: 24px; }
.t-dd { width: 12px; height: 30px; display: grid; place-items: center; color: #666; }
.t-dd svg { width: 6px; height: 4px; }
.t-dd.off { color: #bbb; }
.t-sep { width: 1px; height: 24px; margin: 0 3px; background: #d4d4d4; }
.t.on { background: #9cc8ec; }
.t-dd.on { background: #cfe5f8; }

.status {
  height: 23px;
  padding: 0 6px;
  line-height: 25px;
  color: #123c6c;
  background: linear-gradient(90deg, #0e4a86 60px, #a8d8f8 60px 490px, #0c4684 490px 924px, #2f7cc4 924px 990px, #0c3c74 990px) 0 100% / 100% 2px no-repeat, #2a96fc;
}

/* Fix wizard */
.dialog {
  position: absolute;
  top: 134px;
  right: 105px;
  width: 770px;
  height: 711px;
  display: flex;
  flex-direction: column;
  background: #f0f0f0;
  border: 1px solid #8a8a8a;
  box-shadow: 0 2px 14px rgba(0, 0, 0, .45);
  color: #111;
}
.dlg-bar { display: flex; align-items: center; height: 37px; padding: 0 22px 2px 11px; background: #fff; }
.dlg-bar .plus { width: 16px; height: 16px; margin-right: 7px; }
.dlg-bar h2 { flex: 1; font-size: 14px; line-height: 20px; color: #8c8c8c; }
.dlg-bar button { margin-left: 44px; }
.dlg-bar button svg { width: 14px; height: 14px; }
.dlg-body { flex: 1; display: flex; padding: 4px 5px 5px 6px; gap: 9px; }

.pages {
  flex: none;
  width: 151px;
  padding: 3px 8px 0 0;
  list-style: none;
  background: #fff;
  border: 1px solid #777;
  outline: 1px solid #aaa;
  outline-offset: -3px;
  font-size: 14px;
}
.pages li { height: 24px; }
.pages a { display: flex; height: 24px; padding-left: 5px; line-height: 24px; color: inherit; text-decoration: none; }
.pages svg { width: 20px; height: 20px; margin: 1px 0; }
.pages span { flex: 1; padding-left: 2px; white-space: nowrap; }
.pages .sel span { background: #f0f0f0; }
.pages .rule { background: linear-gradient(#777, #777) 0 11px / 100% 1px no-repeat; }

.content { flex: 1; min-width: 0; display: flex; flex-direction: column; }
.part-row { display: flex; height: 40px; padding-left: 8px; align-items: flex-start; }
.part-row label { width: 91px; line-height: 18px; }
.select { flex: 1; display: grid; grid-template-columns: 1fr 16px; align-items: center; }
.select select {
  grid-area: 1 / 1 / 2 / 3;
  appearance: none;
  height: 25px;
  padding: 1px 3px 0;
  border: 1px solid #a0a0a0;
  border-radius: 0;
  background: #e1e1e1;
}
.select svg { grid-area: 1 / 2; width: 10px; height: 7px; pointer-events: none; }
.btn {
  height: 32px;
  width: 73px;
  border: 1px solid #a4a4a4;
  background: #e1e1e1;
  font-size: 12px;
}
.btn.next { width: 57px; height: 29px; margin: 1px 0 0 6px; background: #cccccc; border-color: #bfbfbf; color: #8a8a8a; }
.panel {
  display: flex;
  flex-direction: column;
  height: 481px;
  margin-right: 4px;
  padding: 26px 12px 13px;
  border: 1px solid #a6a6a6;
  border-radius: 4px;
  background: linear-gradient(#fff 10%, #f0f0f0 75%);
}
fieldset { margin: 0; padding: 0 12px 0 4px; border: 1px solid #dcdcdc; min-width: 0; }
legend { padding: 0 4px; line-height: 16px; }
.advice { height: 94px; display: flex; }
.advice p { flex: 1; padding: 10px 10px 0 11px; line-height: 17px; }
.scroll { width: 20px; height: 57px; margin-top: 10px; padding: 8px 0; display: flex; flex-direction: column; justify-content: space-between; align-items: center; background: #f0f0f0; }
.scroll svg { width: 10px; height: 6px; }
.diag { flex: 1; display: flex; flex-direction: column; margin-top: 6px; }
.full { display: flex; align-items: center; gap: 3px; height: 16px; margin: 12px 0 0 8px; }
input[type="checkbox"] {
  appearance: none;
  width: 16px;
  height: 16px;
  margin: 0;
  border: 1px solid #333;
  background: #fff;
  display: grid;
  place-items: center;
}
input[type="checkbox"]:checked::before {
  content: "";
  width: 9px;
  height: 5px;
  margin-bottom: 3px;
  border: solid #444;
  border-width: 0 0 1px 1px;
  transform: rotate(-45deg);
}
.rows { padding: 16px 0 0 33px; }
.row { display: grid; grid-template-columns: 25px 25px 56px 1fr; align-items: center; height: 25px; }
.row.sub { margin-left: 25px; }
.row svg { width: 16px; height: 16px; margin-bottom: 2px; }
.btn.update { width: 139px; margin: 12px 0 0 auto; }
.btn.update, .btn.follow { display: flex; align-items: center; padding: 0 10px 0 4px; }
.btn span { flex: 1; text-align: center; }
.update svg { width: 20px; height: 20px; }
.follow svg { width: 20px; height: 18px; }
.btn.follow { width: 189px; }
.actions { display: flex; margin: auto 19px 0 0; justify-content: flex-end; gap: 8px; }
.grip { position: absolute; right: 0; bottom: 0; width: 14px; height: 14px; }
```
